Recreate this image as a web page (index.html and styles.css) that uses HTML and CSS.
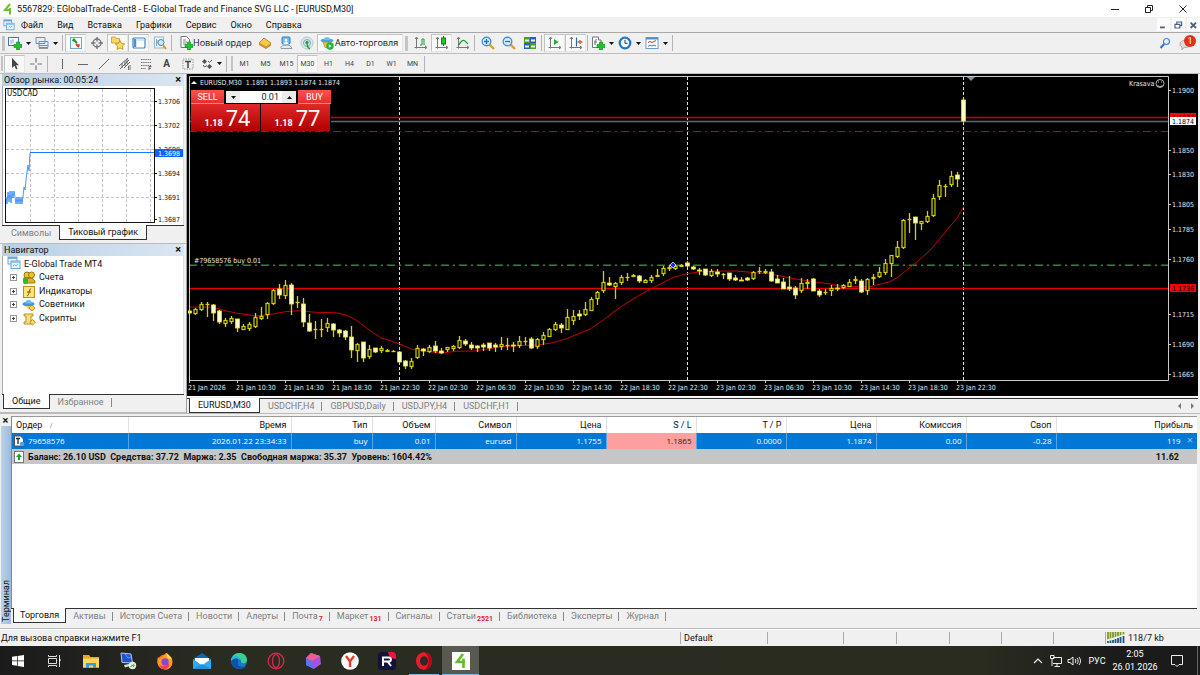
FILE: index.html
```html
<!DOCTYPE html>
<html lang="ru">
<head>
<meta charset="utf-8">
<title>E-Global Trade MT4</title>
<link rel="stylesheet" href="styles.css">
</head>
<body>
<svg class="defs" aria-hidden="true">
  <defs>
    <g id="plus"><path d="M8.500 6h3v2.500h2.500v3h-2.500V14h-3v-2.500H6v-3h2.500z" fill="#1fc32a" stroke="#0b8a16" stroke-width=".6"/></g>
    <g id="windows"><rect x="1" y="1" width="9" height="7" fill="#e8f4fd" stroke="#6aa6d6"/><path d="M1 2h9" stroke="#5a9cd0" stroke-width="1.500"/><rect x="4" y="5" width="9" height="7.500" fill="#e8f4fd" stroke="#6aa6d6"/><path d="M4 6h9" stroke="#7fbbe8" stroke-width="1.500"/><path d="M6 10l1.500-1.500L9 10l2-2" stroke="#6aa6d6" fill="none" stroke-width=".8"/></g>
    <g id="axes"><path d="M2.500 1.500v11M.5 11.500h12M1 3l1.500-2L4 3M11 10l2 1.500-2 1.500" fill="none" stroke="#777"/></g>
    <g id="arrow"><path d="M0 0h5l-2.500 3z" fill="#111"/></g>
  </defs>
</svg>

<header class="titlebar">
  <svg class="i12" viewBox="0 0 12 12"><path d="M8 1L3 7h6M8 5v6.500" fill="none" stroke="#6cc02c" stroke-width="2"/></svg>
  <h1>5567829: EGlobalTrade-Cent8 - E-Global Trade and Finance SVG LLC - [EURUSD,M30]</h1>
  <div class="window-buttons">
    <button aria-label="Свернуть"><svg class="i12" viewBox="0 0 12 12"><path d="M2 6.500h8" stroke="#222" fill="none"/></svg></button>
    <button aria-label="Развернуть"><svg class="i12" viewBox="0 0 12 12"><path d="M2.500 4.500h5v5h-5zM4.500 4V2.500h5v5H8" stroke="#222" fill="none"/></svg></button>
    <button aria-label="Закрыть"><svg class="i12" viewBox="0 0 12 12"><path d="M2.500 2.500l7 7M9.500 2.500l-7 7" stroke="#222" fill="none"/></svg></button>
  </div>
</header>

<nav class="menubar">
  <svg class="i12" viewBox="0 0 14 14"><use href="#windows"/></svg>
  <button>Файл</button><button>Вид</button><button>Вставка</button><button>Графики</button><button>Сервис</button><button>Окно</button><button>Справка</button>
  <div class="child-buttons">
    <button aria-label="Свернуть график"><svg viewBox="0 0 10 10"><path d="M2.500 7h4" stroke="#4b6283" stroke-width="1.500"/></svg></button>
    <button aria-label="Восстановить график"><svg viewBox="0 0 10 10"><path d="M2.500 4.500h4v3h-4zM4 4V2.500h4v3H7" stroke="#4b6283" fill="none"/></svg></button>
    <button aria-label="Закрыть график"><svg viewBox="0 0 10 10"><path d="M3 3l4.500 4.500M7.500 3L3 7.500" stroke="#4b6283" stroke-width="1.500"/></svg></button>
  </div>
</nav>

<div class="toolbar">
  <i class="grip"></i>
  <button class="drop" aria-label="Новый график"><svg class="i14" viewBox="0 0 14 14"><rect x=".5" y="1.500" width="10" height="8" fill="#fff" stroke="#3d7ab5"/><path d="M3 8V4M5 7V3" stroke="#7aa7d0"/><use href="#plus"/></svg><svg class="caret" viewBox="0 0 5 3"><use href="#arrow"/></svg></button>
  <button class="drop" aria-label="Профили"><svg class="i14" viewBox="0 0 14 14"><path d="M1 1.500h9v6H1zM4 5.500h9v6H4z" fill="#e3f0fb" stroke="#5c94c8"/><path d="M4 9.500h9" stroke="#5c94c8"/><path d="M4 12.500h9" stroke="#999"/></svg><svg class="caret" viewBox="0 0 5 3"><use href="#arrow"/></svg></button>
  <i class="sep"></i>
  <button class="tool on" aria-label="Обзор рынка"><svg class="i14" viewBox="0 0 14 14"><rect x="1.500" y="1.500" width="11" height="11" fill="#f4faff" stroke="#6aa8dc"/><path d="M4 3l4 4M3.500 5l2.500-2" stroke="#18a020" stroke-width="2"/><path d="M7 8l3 3M8 10.500l2.500-2" stroke="#e03c28" stroke-width="2"/></svg></button>
  <button class="tool" aria-label="Окно данных"><svg class="i14" viewBox="0 0 14 14"><circle cx="7" cy="7" r="4" fill="none" stroke="#777" stroke-width="1.400"/><path d="M7 1v4.500M7 8.500V13M1 7h4.500M8.500 7H13" stroke="#777" stroke-width="1.400"/></svg></button>
  <button class="tool on" aria-label="Навигатор"><svg class="i14" viewBox="0 0 14 14"><path d="M.5 1h4l1 1.500h3V7h-8z" fill="#fbd768" stroke="#c8952a" stroke-width=".8"/><path d="M9 4.500l1.500 3 3.300.4-2.400 2.200.6 3.300L9 12l-3 1.400.6-3.300-2.400-2.200 3.300-.4z" fill="#ffdf5a" stroke="#c28a18" stroke-width=".8"/></svg></button>
  <button class="tool on" aria-label="Терминал"><svg class="i14" viewBox="0 0 14 14"><rect x="1" y="2" width="12" height="10" rx="1" fill="#fff" stroke="#3f86c8" stroke-width="1.200"/><path d="M3 3v8" stroke="#4a90d0" stroke-width="2.500"/><path d="M5 4h7" stroke="#a7cbe8"/></svg></button>
  <button class="tool" aria-label="Тестер стратегий"><svg class="i14" viewBox="0 0 14 14"><rect x="1.500" y="1" width="9" height="11" fill="#edf5fc" stroke="#9db7cc"/><path d="M3.500 3v7M5 4v4" stroke="#88a7c2"/><circle cx="8" cy="6.500" r="3" fill="#cfe7fb" stroke="#4c88bf"/><path d="M10 9l3 4" stroke="#d79a2a" stroke-width="2"/></svg></button>
  <i class="sep"></i>
  <button class="wide order"><svg class="i14" viewBox="0 0 14 14"><path d="M2 .5h5.500l3 3v8H2z" fill="#fff" stroke="#777"/><path d="M4 4h3M4 6h4M4 8h3" stroke="#888"/><use href="#plus"/></svg>Новый ордер</button>
  <button class="tool" aria-label="MetaEditor"><svg class="i14" viewBox="0 0 14 14"><path d="M1 7l5-5 7 5-5 4z" fill="#f6c748" stroke="#b37c15" stroke-width=".8"/><path d="M1 7.500L8 11.500 13 7.500v2L8 13 1 9z" fill="#c8871b"/></svg></button>
  <button class="tool" aria-label="Вход"><svg class="i14" viewBox="0 0 14 14"><rect x="3" y="1" width="8" height="7" rx="1" fill="#6bbcf6" stroke="#2c7fc4"/><circle cx="7" cy="4" r="1.500" fill="#fff"/><path d="M4.500 8c.5-3 4.500-3 5 0z" fill="#fff"/><path d="M2 12.500c-1-3 3-3 4-3s5-2 7 3z" fill="#e8edf2" stroke="#8b9bab"/></svg></button>
  <button class="tool" aria-label="Сигналы"><svg class="i14" viewBox="0 0 14 14"><circle cx="7" cy="7" r="6" fill="#dce7ee" stroke="#b4c6d3"/><circle cx="7" cy="7" r="3.500" fill="none" stroke="#7ea6c2"/><circle cx="7" cy="6.500" r="1.700" fill="#21a82c"/><path d="M7 7c0 3 1 5 3 6" stroke="#21a82c" stroke-width="1.500" fill="none"/></svg></button>
  <button class="wide auto on"><svg class="i14" viewBox="0 0 14 14"><path d="M2.500 5h9L9 11.500H5z" fill="#f3c438" stroke="#b78512" stroke-width=".7"/><ellipse cx="7" cy="4.500" rx="6.500" ry="2" fill="#4ba1de"/><path d="M3.500 4c.5-4 6.500-4 7 0z" fill="#72bdf0"/><circle cx="10" cy="10" r="3.700" fill="#1eb534"/><path d="M8.800 8.200v3.600l3-1.800z" fill="#fff"/></svg>Авто-торговля</button>
  <i class="grip"></i>
  <button class="tool" aria-label="Бары"><svg class="i14" viewBox="0 0 14 14"><use href="#axes"/><path d="M6 9h2V3h2M10 3v6" stroke="#1a9c28" fill="none"/></svg></button>
  <button class="tool on" aria-label="Свечи"><svg class="i14" viewBox="0 0 14 14"><use href="#axes"/><path d="M8.500 0v10" stroke="#12801c"/><rect x="6.500" y="2" width="4" height="6" fill="#22c832" stroke="#12801c"/></svg></button>
  <button class="tool" aria-label="Линия"><svg class="i14" viewBox="0 0 14 14"><use href="#axes"/><path d="M3 9c3-6 5-6 9-1" stroke="#1a9c28" fill="none" stroke-width="1.200"/></svg></button>
  <i class="sep"></i>
  <button class="tool" aria-label="Увеличить"><svg class="i14" viewBox="0 0 14 14"><path d="M8.500 8.500L13 13" stroke="#d9a12c" stroke-width="2.400"/><circle cx="5.500" cy="5.500" r="4.300" fill="#d8efff" stroke="#4c90d0" stroke-width="1.400"/><path d="M3 5.500h5M5.500 3v5" stroke="#2a6fc0" stroke-width="1.300"/></svg></button>
  <button class="tool" aria-label="Уменьшить"><svg class="i14" viewBox="0 0 14 14"><path d="M8.500 8.500L13 13" stroke="#d9a12c" stroke-width="2.400"/><circle cx="5.500" cy="5.500" r="4.300" fill="#d8efff" stroke="#4c90d0" stroke-width="1.400"/><path d="M3 5.500h5" stroke="#2a6fc0" stroke-width="1.300"/></svg></button>
  <button class="tool" aria-label="Мозаика"><svg class="i14" viewBox="0 0 14 14"><rect x="1" y="1" width="6" height="6" fill="#4e9e16"/><rect x="7" y="1" width="6" height="6" fill="#2a5fc4"/><rect x="1" y="7" width="6" height="6" fill="#2a5fc4"/><rect x="7" y="7" width="6" height="6" fill="#4e9e16"/><path d="M2 4.500h4M8 4.500h4M2 10.500h4M8 10.500h4" stroke="#e6f2ff" stroke-width="2"/></svg></button>
  <i class="sep"></i>
  <button class="tool on" aria-label="Автопрокрутка"><svg class="i14" viewBox="0 0 14 14"><use href="#axes"/><path d="M6 3v6l4.500-3z" fill="#1fae2c"/></svg></button>
  <button class="tool on" aria-label="Сдвиг графика"><svg class="i14" viewBox="0 0 14 14"><use href="#axes"/><path d="M7.500 1.500v9" stroke="#2a68b0" stroke-width="1.200"/><path d="M8.500 6h5M11 4v4" stroke="#e2542c" stroke-width="1.300"/></svg></button>
  <i class="sep"></i>
  <button class="drop" aria-label="Индикаторы"><svg class="i14" viewBox="0 0 14 14"><path d="M1.500 1h6v3h2.500v7.500H1.500z" fill="#fff" stroke="#777"/><path d="M4 9V5c0-1 1-1.500 2-1M3.500 6H6" stroke="#666" fill="none"/><use href="#plus"/></svg><svg class="caret" viewBox="0 0 5 3"><use href="#arrow"/></svg></button>
  <button class="drop" aria-label="Периоды"><svg class="i14" viewBox="0 0 14 14"><circle cx="7" cy="7" r="5.300" fill="#f3faff" stroke="#2376c8" stroke-width="2.200"/><path d="M7 4v3.300h2.500" stroke="#234" fill="none"/></svg><svg class="caret" viewBox="0 0 5 3"><use href="#arrow"/></svg></button>
  <button class="drop" aria-label="Шаблоны"><svg class="i14" viewBox="0 0 14 14"><rect x="1" y="1.500" width="12" height="11" fill="#fff" stroke="#6a9cc8"/><path d="M1 2.500h12" stroke="#4a90d0" stroke-width="2"/><path d="M3 6.500l2-1 2 1 4-2" stroke="#c2382a" fill="none"/><path d="M3 10.500l2-1.500 2 1 2-1 2 1" stroke="#2f77bd" fill="none"/></svg><svg class="caret" viewBox="0 0 5 3"><use href="#arrow"/></svg></button>
  <i class="sep"></i>
  <div class="toolbar-end">
    <button class="tool" aria-label="Поиск"><svg class="i12" viewBox="0 0 12 12"><circle cx="7.500" cy="4.500" r="3" fill="#e6f3ff" stroke="#4a82dc" stroke-width="1.200"/><path d="M5.200 7L1.500 11" stroke="#2f6fd6" stroke-width="2"/></svg></button>
    <button class="tool bell" aria-label="Уведомления"><svg class="i14" viewBox="0 0 14 14"><path d="M1 8c0-5 11-5 11 0 0 3-4 3.500-7 3.500L3 14V11C1.500 10.500 1 9.500 1 8z" fill="#dcdce0" stroke="#aaa"/></svg><span class="badge">1</span></button>
  </div>
</div>

<div class="toolbar frames">
  <i class="grip small"></i>
  <button class="tool on" aria-label="Курсор"><svg class="i12" viewBox="0 0 12 12"><path d="M3 0v10l2.500-2.200L7 11.500l1.500-.8L7 7.200h3z" fill="#444"/></svg></button>
  <button class="tool" aria-label="Перекрестие"><svg class="i12" viewBox="0 0 12 12"><path d="M6 0v4.500M6 7.500V12M0 6h4.500M7.500 6H12" stroke="#777" stroke-width="1.200"/></svg></button>
  <i class="sep line"></i>
  <button class="tool" aria-label="Вертикальная линия"><svg class="i12" viewBox="0 0 12 12"><path d="M6.500 1v10" stroke="#666"/></svg></button>
  <button class="tool" aria-label="Горизонтальная линия"><svg class="i12" viewBox="0 0 12 12"><path d="M1 6.500h10" stroke="#666"/></svg></button>
  <button class="tool" aria-label="Трендовая линия"><svg class="i12" viewBox="0 0 12 12"><path d="M1 11L11 1" stroke="#666"/></svg></button>
  <button class="tool" aria-label="Канал"><svg class="i12" viewBox="0 0 12 12"><path d="M0 8l9-8M1 11l9-9M5 10l6-6M3 5v5M6 3v5M8 1v5" stroke="#666"/><path d="M12 8H9.500v4H12M9.500 10H12" stroke="#666" fill="none" stroke-width=".9"/></svg></button>
  <button class="tool" aria-label="Фибоначчи"><svg class="i12" viewBox="0 0 12 12"><path d="M1 1.500h10M1 4.500h10M1 7.500h10M1 10.500h5" stroke="#777" stroke-dasharray="1.500 .7"/><path d="M11.500 8.500H9V12M9 10.300h2" stroke="#666" fill="none"/></svg></button>
  <button class="tool glyph" aria-label="Текст">A</button>
  <button class="tool" aria-label="Текстовая метка"><svg class="i12" viewBox="0 0 12 12"><rect x="1" y="1" width="10" height="10" fill="none" stroke="#999" stroke-dasharray="1.500 1"/><path d="M3 3.500h6M6 3.500V10" stroke="#444" stroke-width="1.500"/></svg></button>
  <button class="drop" aria-label="Стрелки"><svg class="i12" viewBox="0 0 12 12"><path d="M1 3.500L3.500 1 6 3.500 3.500 6zM6 8.500L8.500 6 11 8.500 8.500 11z" fill="#555"/><path d="M2 7l1.500 2L6 7.500M7 3l1.500 1.500L11 2" stroke="#555" fill="none"/></svg><svg class="caret" viewBox="0 0 5 3"><use href="#arrow"/></svg></button>
  <i class="sep line"></i>
  <i class="grip small"></i>
  <button class="tool">M1</button><button class="tool">M5</button><button class="tool">M15</button><button class="tool on">M30</button><button class="tool">H1</button><button class="tool">H4</button><button class="tool">D1</button><button class="tool">W1</button><button class="tool">MN</button>
  <i class="sep line"></i>
</div>

<main class="workspace">
  <aside class="side">
    <section class="panel">
      <header class="panel-head"><h2>Обзор рынка: 00:05:24</h2><button aria-label="Закрыть">×</button></header>
      <div class="panel-body">
        <svg class="ticks" viewBox="2 86 180 139">
          <rect x="4.500" y="88.500" width="149" height="134" fill="#fff" stroke="#111"/>
          <path d="M29.500 89v133M53.500 89v133M77.500 89v133M101.500 89v133M125.500 89v133M149.500 89v133M5 101.500h148M5 125.500h148M5 149.500h148M5 173.500h148M5 197.500h148" stroke="#c4c4c4" stroke-dasharray="3 2"/>
          <path d="M153 101.500h3M153 125.500h3M153 149.500h3M153 173.500h3M153 197.500h3M153 219.500h3" stroke="#111"/>
          <polyline points="5,197 6,204 7,192 8,202 9,191 10,203 11,191 12,198 13,191 14,197 15,204 16,197 17,204 18,197 19,204 20,197 21,204 22,196 23,187 24,190 25,180 26,172 27,165 28,171 29,153" fill="none" stroke="#4a96ff"/>
          <path d="M29 152.500h124" stroke="#1674ff"/>
          <text class="symbol" x="6" y="96">USDCAD</text>
          <text x="157" y="104">1.3706</text><text x="157" y="128">1.3702</text><text x="157" y="152">1.3698</text>
          <text x="157" y="176">1.3694</text><text x="157" y="200">1.3691</text><text x="157" y="222">1.3687</text>
          <rect x="154" y="149" width="28" height="8" fill="#0f62fe"/><text class="w" x="157" y="156">1.3698</text>
        </svg>
      </div>
      <nav class="tabs"><button class="tab">Символы</button><button class="tab active">Тиковый график</button></nav>
    </section>
    <section class="panel grow">
      <header class="panel-head"><h2>Навигатор</h2><button aria-label="Закрыть">×</button></header>
      <div class="panel-body">
        <ul class="tree">
          <li><svg class="i14" viewBox="0 0 14 14"><use href="#windows"/></svg>E-Global Trade MT4
            <ul>
              <li><i class="node"></i><svg class="i14" viewBox="0 0 14 14"><circle cx="5" cy="4" r="3" fill="#f2c32c" stroke="#9c7412"/><circle cx="9.500" cy="4" r="3" fill="#f2c32c" stroke="#9c7412"/><path d="M4 12c-1-6 9-7 9 0z" fill="#e6b222" stroke="#9c7412"/><rect x="1" y="6" width="5" height="7" rx="2" fill="#35b82e"/></svg>Счета</li>
              <li><i class="node"></i><svg class="i14" viewBox="0 0 14 14"><rect x="1.500" y="1.500" width="11" height="11" fill="#ffe27a" stroke="#b98f22"/><path d="M5 11c2 0 2-7 4-7.500M5 7h4" stroke="#7a5a10" fill="none"/></svg>Индикаторы</li>
              <li><i class="node"></i><svg class="i14" viewBox="0 0 14 14"><ellipse cx="6.500" cy="6" rx="6" ry="2.300" fill="#3f97d8"/><path d="M3 5.500c.5-5 6.500-5 7 0z" fill="#6ebcf0"/><path d="M3.500 8L7 12l3-3.500z" fill="#e6c878"/><path d="M10 7l3 3-3 3-3-3z" fill="#ffd952" stroke="#b98f22"/></svg>Советники</li>
              <li><i class="node"></i><svg class="i14" viewBox="0 0 14 14"><path d="M2 2h9v2H9v6h2v2H2v-2h2V4H2z" fill="#ffdf7d" stroke="#b98f22"/><path d="M10.500 7.500l2.800 2.800-2.800 2.800-2.800-2.800z" fill="#ffd952" stroke="#b98f22"/></svg>Скрипты</li>
            </ul>
          </li>
        </ul>
      </div>
      <nav class="tabs"><button class="tab active">Общие</button><button class="tab barred">Избранное</button></nav>
    </section>
  </aside>

  <section class="chart-area">
    <div class="chart">
      <svg id="chart" viewBox="188 74 1010 322" role="img" aria-label="EURUSD, M30"></svg>
      <form class="trade">
        <button type="button" class="sell">SELL</button>
        <div class="volume"><button type="button" aria-label="Меньше"><svg class="caret" viewBox="0 0 5 3"><use href="#arrow"/></svg></button><input aria-label="Объем" value="0.01"><button type="button" aria-label="Больше"><svg class="caret up" viewBox="0 0 5 3"><use href="#arrow"/></svg></button></div>
        <button type="button" class="buy">BUY</button>
        <div class="quote">1.18 <b>74</b></div>
        <div class="quote">1.18 <b>77</b></div>
      </form>
    </div>
    <nav class="tabs chart-tabs">
      <button class="tab active">EURUSD,M30</button><button class="tab barred">USDCHF,H4</button><button class="tab barred">GBPUSD,Daily</button><button class="tab barred">USDJPY,H4</button><button class="tab barred">USDCHF,H1</button>
      <span class="scrollers"><button aria-label="Назад"><svg viewBox="0 0 5 6"><path d="M4 0v6L1 3z" fill="#777"/></svg></button><button aria-label="Вперед"><svg viewBox="0 0 5 6"><path d="M1 0v6l3-3z" fill="#777"/></svg></button></span>
    </nav>
  </section>
</main>

<section class="terminal">
  <div class="rail"><button aria-label="Закрыть">×</button><div class="rail-bar">Терминал</div></div>
  <div class="terminal-main">
    <div class="terminal-body">
      <table>
        <colgroup><col class="c-order"><col class="c-time"><col class="c-type"><col class="c-vol"><col class="c-sym"><col class="c-n"><col class="c-n"><col class="c-n"><col class="c-n"><col class="c-n"><col class="c-n"><col></colgroup>
        <thead><tr><th>Ордер <span class="sort">/</span></th><th>Время</th><th>Тип</th><th>Объем</th><th>Символ</th><th>Цена</th><th>S / L</th><th>T / P</th><th>Цена</th><th>Комиссия</th><th>Своп</th><th>Прибыль</th></tr></thead>
        <tbody>
          <tr class="selected"><td><svg class="i12" viewBox="0 0 12 12"><path d="M1.500 1h6l3 3v7h-9z" fill="#fff" stroke="#555"/><path d="M3 3.500h4M5 3.500V9" stroke="#222" stroke-width="1.300"/><circle cx="9" cy="9" r="2.300" fill="#4aa8f0"/></svg>79658576</td><td>2026.01.22 23:34:33</td><td>buy</td><td>0.01</td><td>eurusd</td><td>1.1755</td><td class="stop">1.1865</td><td>0.0000</td><td>1.1874</td><td>0.00</td><td>-0.28</td><td class="profit">119 <button aria-label="Закрыть ордер">×</button></td></tr>
          <tr class="balance"><td colspan="11"><svg class="i12" viewBox="0 0 12 12"><rect x="1.500" y=".5" width="9" height="11" fill="#fff" stroke="#777"/><path d="M6 2.500L3 6h2v3h2V6h2z" fill="#1da02a"/></svg>Баланс: 26.10 USD&nbsp; Средства: 37.72&nbsp; Маржа: 2.35&nbsp; Свободная маржа: 35.37&nbsp; Уровень: 1604.42%</td><td class="total">11.62</td></tr>
        </tbody>
      </table>
    </div>
    <nav class="tabs terminal-tabs">
      <button class="tab active">Торговля</button><button class="tab barred">Активы</button><button class="tab barred">История Счета</button><button class="tab barred">Новости</button><button class="tab barred">Алерты</button><button class="tab barred">Почта<sub>7</sub></button><button class="tab barred">Маркет<sub>131</sub></button><button class="tab barred">Сигналы</button><button class="tab barred">Статьи<sub>2521</sub></button><button class="tab barred">Библиотека</button><button class="tab barred">Эксперты</button><button class="tab barred">Журнал</button>
    </nav>
  </div>
</section>

<footer class="status">
  <span class="hint">Для вызова справки нажмите F1</span>
  <span class="cell w88">Default</span><span class="cell w76"></span><span class="cell w53"></span><span class="cell w53"></span><span class="cell w52"></span><span class="cell w52"></span><span class="cell w52"></span>
  <span class="cell link"><svg viewBox="0 0 18 11"><path d="M1 0v11M3.500 0v11M6 0v11M8.500 0v11M11 0v11M13.500 0v11M16.500 0v11" stroke="#7d9a1f" stroke-width="1.800"/><path d="M0 7.500L18 2v9H0z" fill="#f0f0f0"/><path d="M1 9v2M3.500 8.500V11M6 8v3M8.500 7v4M11 6v5M13.500 5v6M16.500 4v7" stroke="#1c587d" stroke-width="1.800"/></svg>118/7 kb</span>
</footer>

<nav class="taskbar">
  <button aria-label="Пуск"><svg class="i14" viewBox="0 0 14 14"><path d="M1 2.800l5-.7v4.500H1zM6.700 2l6.300-.9v5.500H6.700zM1 7.300h5v4.500l-5-.7zM6.700 7.300H13v5.600L6.700 12z" fill="#fff"/></svg></button>
  <button aria-label="Представление задач"><svg class="i14" viewBox="0 0 14 14"><path d="M1.500 4.500h8v5h-8zM1.500 1v1.500h8V1M1.500 13v-1.500h8V13M12.500 1v12" fill="none" stroke="#ddd"/><path d="M12 5h1.500v2H12z" fill="#fff"/></svg></button>
  <button aria-label="Проводник"><svg class="i18" viewBox="0 0 18 18"><path d="M1 3h6l1.500 2H17v11H1z" fill="#e9a820"/><path d="M1 6.500h16V15H1z" fill="#ffd75e"/><path d="M4 16v-5h10v5h-3v-2.500H7V16z" fill="#3f96dc"/></svg></button>
  <button aria-label="Удаленный стол"><svg class="i18" viewBox="0 0 18 18"><path d="M2 1l10 1 1.500 9L3 10.500z" fill="#1f52d0" stroke="#b8c6dc"/><path d="M6 2l3 4 3-1" stroke="#58a0ff" fill="none"/><path d="M5 13l7-1.500 1 2-7 2z" fill="#d5d9de"/><circle cx="13.500" cy="13.500" r="3.700" fill="#dfeee0"/><path d="M11.500 14.500l3.500-2M14 15l1.500-2" stroke="#2b9c38"/></svg></button>
  <button aria-label="Firefox"><svg class="i18" viewBox="0 0 18 18"><circle cx="9" cy="10" r="7.500" fill="#ff7b1c"/><path d="M9 2c2-3 4 2 6.500 3.500C18 12 14 18 9 17.500 3 17 0 12 2 5l2 2c1-1 3-2 5-5z" fill="#ff9a22"/><path d="M10 1c2 2 5 3 6 7-1-1-3-2-4-1z" fill="#ffdc3c"/><circle cx="9" cy="10" r="3.700" fill="#8a45d8"/><path d="M3 12c2 3 8 3 10-1 1 4-2 6-4.500 6S4 15 3 12z" fill="#f43a4f"/></svg></button>
  <button aria-label="Почта"><svg class="i18" viewBox="0 0 18 18"><path d="M0 7l9-6 9 6v10H0z" fill="#0f67ad"/><path d="M2 6h14v3l-7 5-7-5z" fill="#fff"/><path d="M0 7l9 6.500L0 17zM18 7l-9 6.500 9 3.500z" fill="#35a7ea"/><path d="M0 17l9-5 9 5z" fill="#1f93de"/></svg></button>
  <button aria-label="Edge"><svg class="i18" viewBox="0 0 18 18"><circle cx="9" cy="9" r="8" fill="#1879cc"/><path d="M1 9C2-2 17-1 17 8c0 4-5 4-6 2 1-4-6-6-10-1z" fill="#3bcf92"/><path d="M1 9c5-5 8-2 7 1-1 4 3 6 8 4-4 6-14 3-15-5z" fill="#0f52a8"/><path d="M1 7C4 2 10 4 10 8 7 5 3 6 1 9z" fill="#25b6e6"/></svg></button>
  <button aria-label="Opera GX"><svg class="i18" viewBox="0 0 18 18"><circle cx="9" cy="9" r="7.800" fill="none" stroke="#e32650" stroke-width="1.200"/><ellipse cx="9" cy="9" rx="3.500" ry="6.500" fill="none" stroke="#e32650" stroke-width="1.200"/></svg></button>
  <button aria-label="Кристалл"><svg class="i18" viewBox="0 0 18 18"><path d="M7 1l9 3 1 8-7 5-8-4V6z" fill="#a950de"/><path d="M7 1l9 3-8 5-6-3z" fill="#f25c93"/><path d="M2 6l6 3 2 8-8-4z" fill="#5a74f0"/></svg></button>
  <button aria-label="Яндекс Браузер"><svg class="i18" viewBox="0 0 18 18"><circle cx="9" cy="9" r="8.800" fill="#fff"/><path d="M5 4l4 5.500L13 4M9 9v6" fill="none" stroke="#f0382c" stroke-width="2.400"/></svg></button>
  <button aria-label="Rutube"><svg class="i18" viewBox="0 0 18 18"><rect width="18" height="18" rx="3.500" fill="#10143a"/><path d="M10 0h4.500A3.500 3.500 0 0 1 18 3.500V7c-5 0-7-3-8-7z" fill="#f0143c"/><path d="M5 14V5.500h6c2.500 0 2.500 4 0 4H5M10 10l3 4" fill="none" stroke="#fff" stroke-width="2"/></svg></button>
  <button class="running" aria-label="Opera"><svg class="i18" viewBox="0 0 18 18"><ellipse cx="9" cy="9" rx="6" ry="6.800" fill="none" stroke="#e81c2c" stroke-width="4"/><path d="M9 .2c11 0 11 17.600 0 17.600 6-3 6-14.600 0-17.600z" fill="#b00818"/></svg></button>
  <button class="running current" aria-label="MetaTrader"><svg class="i18" viewBox="0 0 18 18"><rect width="18" height="18" fill="#fff"/><path d="M11 2L5 10h8M11.500 6.500V16" fill="none" stroke="#62bd2a" stroke-width="2.600"/></svg></button>
  <div class="tray">
    <button aria-label="Скрытые значки"><svg viewBox="0 0 14 14"><path d="M3 9l4-4 4 4" fill="none" stroke="#eee" stroke-width="1.200"/></svg></button>
    <button aria-label="Сеть"><svg viewBox="0 0 14 14"><path d="M4 3.500h8.500v6H4M8 9.500V12M5.500 12.500H11M1.500 1.500h3.500v3H1.500zM3 5v7" fill="none" stroke="#eee"/></svg></button>
    <button aria-label="Звук"><svg viewBox="0 0 14 14"><path d="M1 5.500h2L6 3v8L3 8.500H1zM8 5c1 1 1 3 0 4M10 4c1.500 2 1.500 4 0 6M12 3c2 3 2 5 0 8" fill="none" stroke="#eee"/></svg></button>
    <button class="lang">РУС</button>
    <button class="clock"><time>2:05</time><time>26.01.2026</time></button>
    <button class="note" aria-label="Центр уведомлений"><svg viewBox="0 0 14 14"><path d="M1.500 1.500h11v9H9L7 12.500 5 10.500H1.500z" fill="none" stroke="#eee"/></svg></button>
  </div>
</nav>
<script src="chart.js"></script>
</body>
</html>
```
FILE: styles.css
```css
* { box-sizing: border-box; }
body {
  margin: 0;
  min-height: 100vh;
  display: flex;
  flex-direction: column;
  background: #f0f0f0;
  color: #111;
  font: 9px/12px Roboto, "Noto Sans", sans-serif;
}
button { margin: 0; padding: 0; border: 0; background: none; color: inherit; font: inherit; white-space: nowrap; }
h1, h2 { margin: 0; font: inherit; }
ul { margin: 0; padding: 0; list-style: none; }
svg { display: block; flex: none; }
.defs { position: absolute; width: 0; height: 0; }
.i12 { width: 12px; height: 12px; }
.i14 { width: 14px; height: 14px; }
.i18 { width: 18px; height: 18px; }

.titlebar { display: flex; align-items: center; height: 17px; padding-left: 2px; gap: 3px; background: #fff; }
.window-buttons { display: flex; margin-left: auto; }
.window-buttons button { display: grid; place-items: center; width: 34px; }

.menubar { display: flex; align-items: center; gap: 14px; height: 16px; padding-left: 3px; border-bottom: 1px solid #a8a8a8; }
.menubar > svg { margin-right: -8px; }
.child-buttons { display: flex; gap: 2px; margin-left: auto; }
.child-buttons button { width: 13px; height: 13px; background: #fbfbfb; }
.child-buttons svg { width: 12px; height: 12px; }

.toolbar { display: flex; align-items: center; height: 21px; border-bottom: 1px solid #bdbdbd; }
.grip { width: 7px; height: 15px; flex: none; border-left: 2px solid transparent; background: linear-gradient(90deg, #c4c4c4 3px, transparent 3px) content-box; }
.grip.small { width: 4px; border-left: 0; background: linear-gradient(90deg, transparent 1px, #c4c4c4 1px, #c4c4c4 3px, transparent 3px); }
.sep { width: 4px; height: 16px; flex: none; background: linear-gradient(90deg, transparent 1px, #b4b4b4 1px, #b4b4b4 2px, transparent 2px); }
.sep.line { width: 5px; }
.tool { display: grid; place-items: center; width: 21px; height: 18px; flex: none; }
.drop { display: flex; align-items: center; gap: 4px; width: 27px; padding-left: 1px; height: 18px; flex: none; }
.caret { width: 5px; height: 3px; }
.caret.up { transform: rotate(180deg); }
.on { background: #f9f9f9; border: 1px solid #c2c2c2; border-right-color: #e4e4e4; border-bottom-color: #e4e4e4; }
.wide { display: flex; align-items: center; height: 18px; flex: none; font-family: "Open Sans", "Noto Sans", sans-serif; }
.order { width: 80px; padding-left: 5px; }
.auto { width: 86px; padding-left: 2px; gap: 1px; }
.toolbar-end { display: flex; margin-left: auto; padding-right: 4px; }
.bell { position: relative; }
.badge { position: absolute; right: 0; top: 1px; width: 12px; height: 12px; border-radius: 50%; background: #e2301a; color: #fff; text-align: center; }
.frames { height: 20px; font-size: 7px; color: #444; }
.frames .drop { padding-left: 3px; }
.glyph { font-size: 10px; font-weight: 700; }

.workspace { display: flex; min-height: 338px; }
.side { display: flex; flex-direction: column; width: 187px; flex: none; border-right: 1px solid #a0a0a0; }
.panel { display: flex; flex-direction: column; padding: 0 2px 2px; border-bottom: 1px solid #bbb; }
.panel.grow { flex: 1; }
.panel-head { display: flex; justify-content: space-between; align-items: center; height: 12px; padding: 0 3px 0 2px; background: linear-gradient(90deg, #b9cfe5, #dae6f2); }
.panel-head button, .rail > button { font-weight: 700; font-size: 11px; line-height: 10px; }
.panel-body { flex: 1; background: #fff; border-right: 1px solid #ddd; border-left: 1px solid #aaa; }
.ticks { width: 100%; }
.ticks text, .chart text { font-family: "DejaVu Sans Condensed", "DejaVu Sans", sans-serif; font-size: 7px; fill: #111; }
.ticks .symbol { font-size: 8px; }
.ticks .w { fill: #fff; }

.tabs { display: flex; height: 16px; padding-left: 1px; border-top: 1px solid #333; background: #f0f0f0; }
.tab { position: relative; height: 14px; padding: 0 8px; color: #808080; }
.tab.active { margin-top: -1px; height: 15px; color: #111; background: #fff; border: 1px solid #333; border-top: 0; }
.tab.barred::after { content: ""; position: absolute; right: 0; top: 3px; height: 9px; border-right: 1px solid #888; }

.tree { padding: 0 4px; }
.tree li { line-height: 13px; }
.tree svg { display: inline-block; vertical-align: -3px; margin-right: 3px; }
.tree ul { margin-left: 3px; }
.tree ul li { display: flex; align-items: center; height: 13px; }
.tree ul li:nth-child(even) { margin-top: 1px; }
.node { width: 7px; height: 7px; margin-right: 5px; border: 1px solid #999; background: linear-gradient(#345, #345) center / 3px 1px no-repeat, linear-gradient(#345, #345) center / 1px 3px no-repeat, #fff; }

.chart-area { flex: 1; min-width: 0; display: flex; flex-direction: column; padding-right: 2px; }
.chart { position: relative; padding-left: 1px; background: #000; border-bottom: 1px solid #fff; }
.chart > svg { width: 100%; height: auto; background: #000; }
.chart text { fill: #e8e8e8; }
.chart .ink { fill: #000; }
.trade { position: absolute; left: 4px; top: 16px; display: grid; grid-template-columns: repeat(20, 7px); grid-template-rows: 14px 27px; width: 140px; color: #fff; }
.sell, .buy { grid-column: span 5; margin-right: 2px; background: linear-gradient(#ff5050, #e33030); border-bottom: 1px solid #ff8080; }
.buy { margin: 0 0 0 2px; }
.volume { grid-column: span 10; display: flex; padding: 1px 0; }
.volume button { display: grid; place-items: center; width: 14px; background: #ececec; }
.volume input { flex: 1; min-width: 0; height: 12px; padding: 0 3px; border: 0; text-align: right; font: inherit; color: #222; }
.quote { grid-column: span 10; display: flex; align-items: flex-end; justify-content: center; gap: 3px; padding: 0 0 2px 4px; background: linear-gradient(#e02828, #b00000); border-right: 1px solid #000; font-weight: 700; }
.quote b { font-size: 22px; line-height: 20px; font-weight: 400; }
.chart-tabs { height: 15px; margin-top: 1px; padding-left: 2px; }
.scrollers { display: flex; align-items: center; gap: 8px; margin-left: auto; padding-right: 3px; }
.scrollers svg { width: 5px; height: 6px; }

.terminal { display: flex; flex: 1; min-height: 216px; padding: 2px 0 4px; border-top: 1px solid #bbb; border-bottom: 1px solid #bbb; }
.rail { display: flex; flex-direction: column; align-items: center; width: 11px; flex: none; }
.rail-bar { flex: 1; width: 10px; padding-top: 2px; writing-mode: vertical-rl; transform: rotate(180deg); line-height: 10px; background: linear-gradient(90deg, #9bbbdc, #bcd2e8); }
.terminal-main { flex: 1; min-width: 0; display: flex; flex-direction: column; padding-right: 3px; }
.terminal-body { flex: 1; background: #fff; border-left: 1px solid #888; border-top: 1px solid #999; }
table { width: 100%; table-layout: fixed; border-collapse: collapse; }
th, td { height: 16px; padding: 0 4px; text-align: right; font-weight: 400; line-height: 12px; white-space: nowrap; border-right: 1px solid #e0e0e0; }
th:first-child, td:first-child { text-align: left; }
td:first-child { padding-left: 1px; }
td svg { display: inline-block; vertical-align: -3px; margin-right: 3px; }
th:last-child, td:last-child { border-right: 0; }
.c-order { width: 116px; } .c-time { width: 163px; } .c-type { width: 81px; } .c-vol { width: 63px; } .c-sym { width: 81px; } .c-n { width: 90px; }
.sort { padding-left: 5px; font-size: 7px; color: #888; }
.selected { background: #0078d7; color: #fff; font-family: "Open Sans", "Noto Sans", sans-serif; font-size: 8px; }
.selected td { border-color: #5aa6e4; }
.selected .stop { background: #ffa0a0; color: #222; }
.selected .profit button { padding-left: 4px; color: #9cc4ea; font-size: 11px; line-height: 10px; }
.balance { background: #c6c6c6; }
.balance td { height: 15px; font-weight: 700; border-color: #c6c6c6; }
.balance .total { padding-right: 18px; }
.terminal-tabs { padding-left: 2px; }
.terminal-tabs .tab { padding: 0 7px; }
.terminal-tabs .tab.active { padding: 0 6px; }
sub { font-size: 7px; line-height: 7px; font-weight: 700; color: #e8202c; vertical-align: -2px; padding-left: 1px; }

.status { display: flex; align-items: center; height: 17px; padding-left: 1px; border-top: 1px solid #fff; }
.hint { flex: 1; }
.cell { height: 12px; padding-left: 3px; border-left: 1px solid #aaa; }
.w88 { width: 87px; } .w76 { width: 76px; } .w53 { width: 53px; } .w52 { width: 52px; }
.link { display: flex; gap: 3px; width: 95px; padding-left: 1px; }
.link svg { width: 18px; height: 11px; }

.taskbar { display: flex; height: 30px; color: #fff; background: linear-gradient(90deg, #1b1b1b, #2a2c22 18%, #2a2c20 82%, #1b1b1b 93%); }
.taskbar > button { display: grid; place-items: center; width: 37px; flex: none; }
.taskbar > button:first-child { width: 35px; }
.taskbar > .running { background: linear-gradient(#76b9ed, #76b9ed) center bottom / 30px 2px no-repeat; }
.taskbar > .current { background: linear-gradient(#76b9ed, #76b9ed) center bottom / 37px 2px no-repeat, #585a52; }
.tray { display: flex; align-items: center; margin-left: auto; margin-right: 2px; border-right: 1px solid #666; }
.tray svg { width: 14px; height: 14px; }
.tray button { display: grid; place-items: center; width: 18px; }
.tray .lang { width: 28px; }
.tray .clock { width: 48px; line-height: 13px; }
.tray .note { width: 38px; padding-right: 3px; }
```
FILE: chart.js
```js
// Candles: high, body top, body bottom, low, kind (f falling, h rising, d doji).
// Vertical values are thirds of a pixel below the 250px line.
const candles = `178,182,190,194,f 174,176,192,194,h 156,163,180,182,h 156,162,164,200,d 162,164,188,214,f 180,182,216,222,f 204,210,221,231,h 198,204,217,222,h 206,208,234,245,f 222,229,240,240,h
216,222,236,242,h 190,200,230,234,h 172,198,206,210,h 156,158,194,206,h 116,121,163,166,h 101,117,135,146,f 91,104,139,146,h 98,105,163,194,f 138,156,158,174,d 144,162,216,230,f
191,219,243,246,f 214,237,239,268,d 207,236,240,262,d 204,220,234,246,h 220,222,240,260,f 237,240,248,260,f 240,244,260,270,f 228,261,300,324,f 278,281,304,335,h 276,277,325,337,f
286,297,322,326,h 294,295,306,308,f 288,294,304,308,h 297,299,303,305,h 300,303,305,306,d 302,305,336,340,f 330,334,347,358,f 324,333,352,356,h 286,294,324,328,h 294,298,304,318,f
284,291,306,310,h 274,288,304,308,f 294,302,308,312,f 290,292,300,306,h 286,288,297,304,h 258,269,293,296,h 268,274,281,288,f 276,285,293,300,f 286,288,294,306,f 279,286,290,304,f
278,280,294,304,f 279,286,290,306,f 262,282,290,300,h 264,284,288,300,d 275,285,288,306,f 258,274,288,294,h 262,274,278,286,d 260,268,293,297,f 264,268,290,296,h 246,256,270,286,h
234,238,260,262,h 216,222,241,243,h 220,226,234,248,f 178,200,239,240,h 180,198,212,224,h 180,192,198,210,f 156,176,194,198,h 140,146,182,184,h 122,126,146,164,h 62,97,122,128,h
80,98,106,108,f 96,99,112,148,h 74,80,98,104,h 68,80,82,94,d 72,74,80,82,h 74,78,94,100,f 86,89,98,100,h 74,82,94,100,h 56,74,80,82,h 48,53,72,78,h
44,50,58,62,h 44,47,57,59,h 43,46,50,52,h 32,40,48,50,f 48,50,57,60,f 54,60,64,74,f 56,58,75,77,f 56,62,79,80,h 58,67,71,82,f 68,73,75,88,d
68,70,86,92,f 74,84,90,92,f 82,89,92,94,f 82,85,89,94,f 62,66,88,90,h 52,62,64,72,d 56,63,68,72,h 56,67,94,96,f 74,88,98,100,f 84,96,116,118,f
78,112,118,124,f 108,114,136,148,f 84,98,122,130,h 88,97,103,116,h 84,87,122,124,f 118,124,134,142,f 116,126,128,136,d 106,114,122,138,h 102,114,118,124,f 102,105,113,116,h
88,96,110,112,h 78,87,92,102,h 88,92,127,130,f 84,88,122,134,h 72,80,86,106,h 52,66,80,84,h 26,38,70,74,h 14,16,41,80,h -26,-10,22,24,h -94,-90,-6,-2,h
-112,-93,-91,-52,d -100,-98,-82,-30,f -88,-86,-78,-60,h -116,-102,-84,-82,h -168,-156,-102,-98,h -210,-196,-159,-150,h -198,-192,-190,-160,d -236,-222,-194,-190,h -234,-225,-214,-190,f -456,-450,-386,-384,f`;

// Moving average: x in thirds of a pixel from 186, y as above.
const average = '10,171 82,172 118,182 154,190 210,198 244,195 298,185 340,182 388,187 448,188 480,195 510,210 550,240 586,264 622,275 640,281 676,297 712,303 766,309 810,304 864,303 910,296 946,290 1000,287 1052,285 1102,278 1142,266 1212,237 1252,210 1302,172 1352,140 1402,113 1458,84 1502,71 1552,64 1652,63 1752,72 1842,89 1932,102 1972,110 2052,110 2112,95 2137,81 2162,60 2202,28 2232,1 2262,-34 2292,-71 2312,-94 2332,-128';

const dates = ['21 Jan 2026', '21 Jan 10:30', '21 Jan 14:30', '21 Jan 18:30', '21 Jan 22:30', '22 Jan 02:30', '22 Jan 06:30', '22 Jan 10:30', '22 Jan 14:30', '22 Jan 18:30', '22 Jan 22:30', '23 Jan 02:30', '23 Jan 06:30', '23 Jan 10:30', '23 Jan 14:30', '23 Jan 18:30', '23 Jan 22:30'];
const prices = [['1.1900', 90], ['1.1850', 150], ['1.1830', 174], ['1.1805', 204], ['1.1785', 229], ['1.1760', 259], ['1.1715', 314], ['1.1690', 344], ['1.1665', 374]];

const y = v => Math.round(250 + v / 3);
const line = (d, color, extra = '') => `<path d="${d}" stroke="${color}" fill="none" ${extra}/>`;
const out = [];

out.push(line('M399.500 77V380M687.500 77V380M963.500 77V380', '#ddd', 'stroke-dasharray="3 2"'));
out.push(line('M189 265.300H1168', '#249024', 'stroke-width="1.500" stroke-dasharray="8 4 2 4"'));
out.push(line('M189 131.500H1168', '#c80000', 'stroke-width="1.200" stroke-dasharray="8 4 2 4"'));
out.push(line('M189 117.500H1168', '#d00000', 'stroke-width="1.400"'));
out.push(line('M189 121.500H1168', '#5f6878', 'stroke-width="1.400"'));
out.push(line('M189 288.500H1168', '#e80000', 'stroke-width="1.300"'));
out.push(`<polyline points="${average.split(' ').map(p => { const [a, b] = p.split(','); return (186 + a / 3).toFixed(1) + ',' + (250 + b / 3).toFixed(1); }).join(' ')}" fill="none" stroke="#c80000"/>`);

candles.trim().split(/\s+/).forEach((row, i) => {
  const [h, t, b, l, kind] = row.split(',');
  const x = 189.5 + 6 * i;
  const top = y(+t), height = Math.max(1, y(+b) - top);
  out.push(line(`M${x} ${y(+h)}V${y(+l)}`, '#d4d400', 'stroke-width="1.300"'));
  if (kind === 'd') out.push(line(`M${x - 2} ${top + .5}h4`, '#d4d400', 'stroke-width="1.300"'));
  else if (kind === 'f') out.push(`<rect x="${x - 2}" y="${top}" width="4" height="${height}" fill="#ffffc0" stroke="#e8e800" stroke-width=".8"/>`);
  else out.push(`<rect x="${x - 1.5}" y="${top + .5}" width="3" height="${Math.max(1, height - 1)}" fill="#000" stroke="#d0d000" stroke-width="1.200"/>`);
});

out.push(line('M189.500 380V76.500H1168.500V380.500H189', '#c8c8c8'));
out.push('<path d="M967 77h8l-4 4z" fill="#8090a0"/><path d="M670 265l3-3 3 3-3 3z" fill="#2030f0" stroke="#fff" stroke-width=".7"/>');
dates.forEach((d, i) => out.push(line(`M${189.5 + 48 * i} 380v3`, '#ccc') + `<text x="${188 + 48 * i}" y="390">${d}</text>`));
prices.forEach(([p, at]) => out.push(line(`M1168 ${at + .5}h3`, '#ccc') + `<text x="1172" y="${at + 3}">${p}</text>`));
out.push('<rect x="1170" y="113" width="26" height="8" fill="red"/><text class="ink" x="1172" y="120">1.1877</text>');
out.push('<rect x="1170" y="117" width="26" height="8" fill="#fff"/><text class="ink" x="1172" y="124">1.1874</text>');
out.push('<rect x="1170" y="284" width="26" height="8" fill="red"/><text class="ink" x="1172" y="291">1.1736</text>');
out.push('<text x="194" y="263">#79658576 buy 0.01</text><text x="1129" y="86">Krasava</text>');
out.push('<g fill="none" stroke="#ddd" stroke-width=".8"><circle cx="1160" cy="83.500" r="4"/><path d="M1157.500 85c1 2 4 2 5 0M1158.500 81.500v1M1161.500 81.500v1"/></g>');
out.push('<path d="M191 84h6l-3-3z" fill="#fff"/><text x="200" y="85">EURUSD,M30&#160; 1.1891 1.1893 1.1874 1.1874</text>');

document.getElementById('chart').innerHTML = out.join('');
```
